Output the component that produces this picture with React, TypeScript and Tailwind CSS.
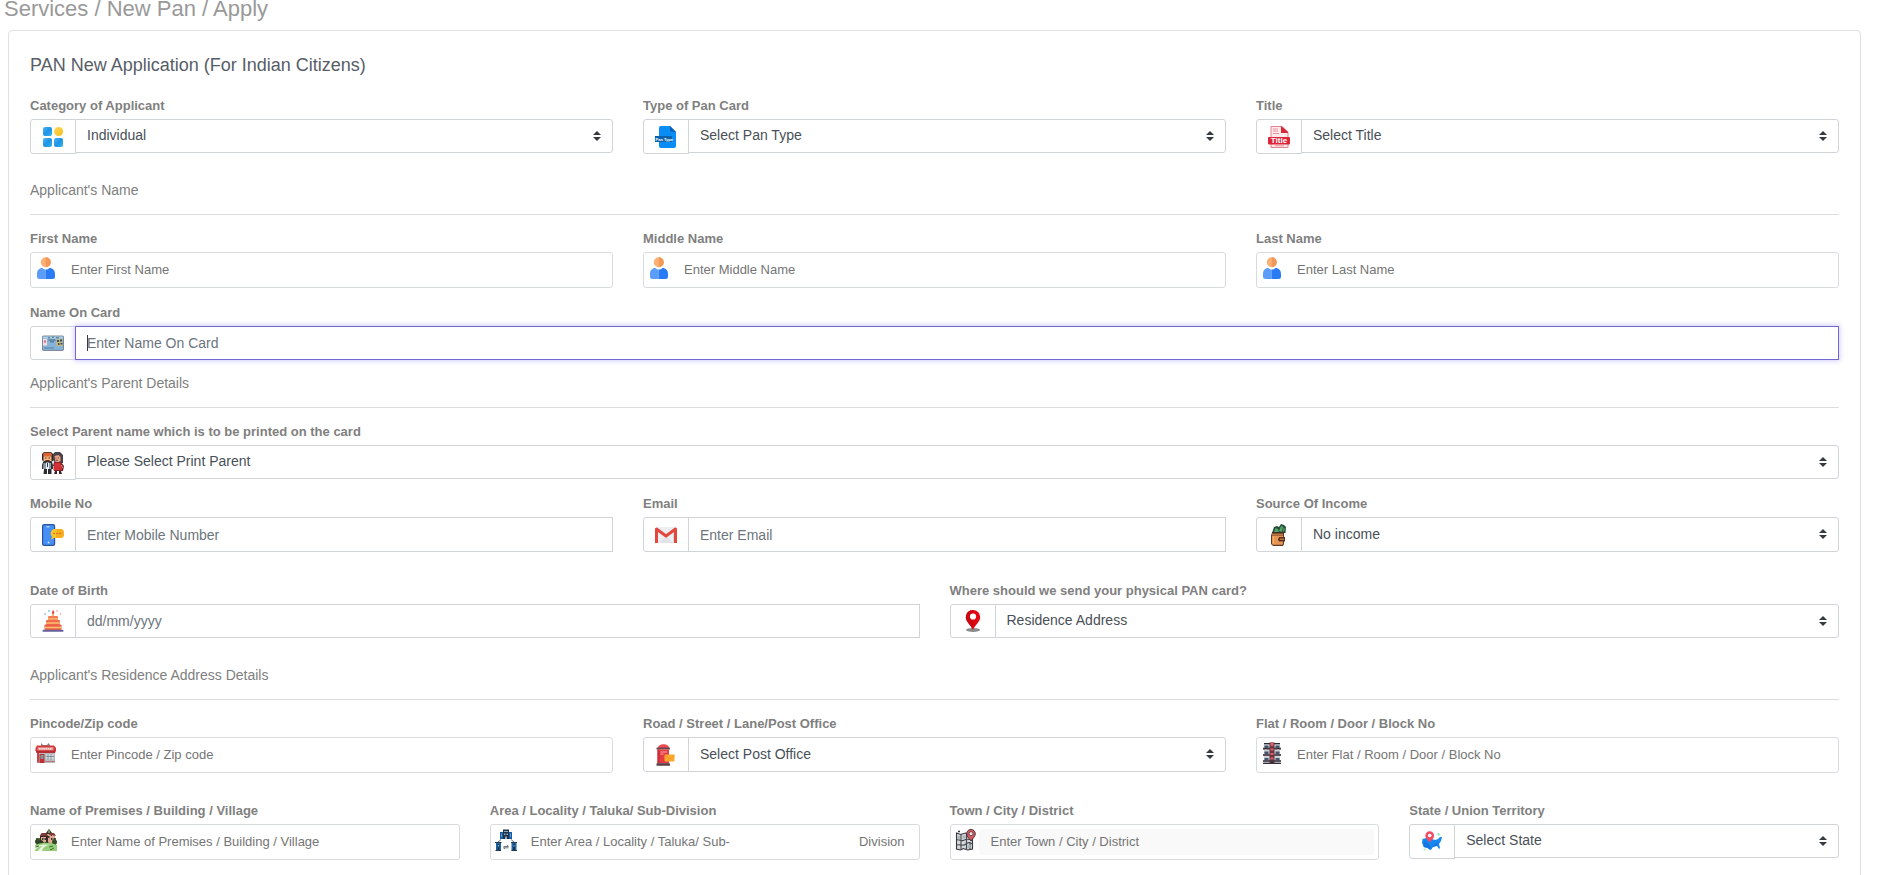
import type { ReactNode } from "react";

type Size = "offset" | "tall" | "short";

const addonHeight: Record<Size, string> = { offset: "h-[35px]", tall: "h-[35px]", short: "h-[34px]" };
const controlHeight: Record<Size, string> = { offset: "h-[34px]", tall: "h-[35px]", short: "h-[34px]" };

function Svg({ children }: { children: ReactNode }) {
  return (
    <svg viewBox="0 0 22 22" className="size-[22px] shrink-0" aria-hidden="true">
      {children}
    </svg>
  );
}

function GridIcon() {
  return (
    <Svg>
      <defs>
        <linearGradient id="tile" x1="0" y1="0" x2="1" y2="1">
          <stop offset="0" stopColor="#4fb4f5" />
          <stop offset="0.5" stopColor="#1f93e6" />
          <stop offset="1" stopColor="#35b3ea" />
        </linearGradient>
        <linearGradient id="sun" x1="0" y1="0" x2="1" y2="1">
          <stop offset="0" stopColor="#ffd75a" />
          <stop offset="1" stopColor="#f9bd1b" />
        </linearGradient>
      </defs>
      <rect x="1" y="1" width="9" height="9" rx="2" fill="url(#tile)" />
      <circle cx="16.6" cy="5.5" r="4.5" fill="url(#sun)" />
      <rect x="1" y="12" width="9" height="9" rx="2" fill="url(#tile)" />
      <rect x="12" y="12" width="9" height="9" rx="2" fill="url(#tile)" />
    </Svg>
  );
}

function PanTypeIcon() {
  return (
    <Svg>
      <path d="M6 0h9l6 6v14a2 2 0 0 1-2 2H6a2 2 0 0 1-2-2V2a2 2 0 0 1 2-2z" fill="#0a8cf5" />
      <path d="M15 0l6 6h-4a2 2 0 0 1-2-2z" fill="#0862b8" />
      <rect x="0" y="10" width="17" height="6" fill="#0a62ad" />
      <text x="0.5" y="14.5" fontSize="4" fontWeight="700" fill="#fff" fontFamily="Liberation Sans, sans-serif">Pan Type</text>
    </Svg>
  );
}

function TitleIcon() {
  return (
    <Svg>
      <path d="M3 .5h11l6 6v15H3z" fill="#fbe9eb" stroke="#e27882" strokeWidth="0.9" />
      <path d="M13 .5h1l6 5.5v1h-7z" fill="#d9283a" />
      <path d="M5 3h5M5 5h5M5 7.5h6M7 19.8h9" stroke="#e58b93" strokeWidth="0.9" />
      <rect x="0" y="11" width="22" height="7.5" rx="1" fill="#de2437" />
      <text x="11" y="17.4" fontSize="8" fontWeight="700" textAnchor="middle" fill="#fff" fontFamily="Liberation Sans, sans-serif">Title</text>
    </Svg>
  );
}

function PersonIcon() {
  return (
    <Svg>
      <circle cx="10.8" cy="5.2" r="5" fill="#fbb074" />
      <path d="M10.8.2a5 5 0 0 1 0 10z" fill="#f2995a" />
      <path d="M2 19.500v-2.500c0-3.600 2-6 5.400-6 1.200 1.200 2 1.500 3.400 1.500V22H4.500A2.500 2.500 0 0 1 2 19.500z" fill="#5c9dfb" />
      <path d="M20 19.500v-2.500c0-3.600-2.200-6-5.500-6-1.200 1.200-2.200 1.500-3.700 1.500V22h6.700a2.500 2.500 0 0 0 2.500-2.500z" fill="#2a7bf6" />
    </Svg>
  );
}

function CardIcon() {
  return (
    <Svg>
      <rect x="0.4" y="4" width="21.2" height="14.4" rx="1" fill="#86b4d8" stroke="#626d78" strokeWidth="0.8" />
      <rect x="0.8" y="4.500" width="20.400" height="2.200" fill="#a9cce2" />
      <rect x="1" y="7" width="4" height="6.500" fill="#f3dfe2" />
      <circle cx="3" cy="9.500" r="1.200" fill="#d4747c" />
      <path d="M6 5.800h2M10 5.200h2M14 5.800h3M6.500 8h7M8 9.800h4" stroke="#40617c" strokeWidth="0.9" />
      <rect x="14.500" y="7" width="6" height="7" fill="#c7b97c" />
      <path d="M15 8h2v2h-2zM18 7.500h2v2h-2zM16 11h1.500v2H16zM18.500 11h2v1.500h-2z" fill="#3e5158" />
      <path d="M2 16h10" stroke="#577fa2" />
    </Svg>
  );
}

function ParentsIcon() {
  return (
    <Svg>
      <path d="M2 0h7l2 2v7l-2 1H2L0 8V2z" fill="#322b2d" />
      <path d="M2 .800h7l1 2-1 2.200H2L1 3z" fill="#dd6435" />
      <path d="M1.500 4.500h8V9h-8z" fill="#f2b37f" />
      <path d="M3 6h1.500M6.500 6H8M3.500 8.500h4" stroke="#5b2418" strokeWidth="0.900" />
      <path d="M13 0h5l3 3v8h-8l-2-3V2z" fill="#4a4249" />
      <path d="M12.500 4l4-1 2 2v4l-2 1h-3z" fill="#eba488" />
      <path d="M13.500 6h1M16 6h1M14 8.300h2" stroke="#5b2418" strokeWidth="0.800" />
      <path d="M1 10h9l1 3v4H0v-4z" fill="#30363d" />
      <path d="M1.500 11h2L5 15l2-4h2v6h-8z" fill="#8da0aa" />
      <path d="M4 10.500h3V17H4z" fill="#edf0f1" />
      <path d="M5 11h1v4H5z" fill="#2d3c4b" />
      <path d="M2 17h3v5H1.500zM6 17h3.500v5H6z" fill="#292c31" />
      <path d="M12 10h7l3 4-1 5h-9l-1-5z" fill="#6e222a" />
      <path d="M12.500 10.800h6l1.500 7.500h-8.500z" fill="#d52f38" />
      <path d="M13 19h2v3h-3zM17 19h2l1 3h-3z" fill="#3a2528" />
      <path d="M19.500 13l1 3M11.500 14v3" stroke="#e79b7e" />
    </Svg>
  );
}

function MobileIcon() {
  return (
    <Svg>
      <rect x="0.600" y="0.600" width="12" height="20.800" rx="1.600" fill="#458ff5" stroke="#28539e" strokeWidth="1.200" />
      <path d="M4.500 2.800h3" stroke="#e2eefc" />
      <circle cx="6.600" cy="18.500" r="1" fill="#c9e1ff" />
      <path d="M12 5h6.500a3.500 4.500 0 0 1 0 9H12l-3 1.500 1-3A4.500 4.500 0 0 1 12 5z" fill="#fbc52c" />
      <path d="M15 5h3.500a3.500 4.500 0 0 1 0 9H14z" fill="#f8ad1e" />
      <circle cx="12" cy="9.500" r="0.800" fill="#ce5522" />
      <circle cx="15" cy="9.500" r="0.800" fill="#ce5522" />
      <circle cx="18" cy="9.500" r="0.800" fill="#ce5522" />
    </Svg>
  );
}

function MailIcon() {
  return (
    <Svg>
      <rect x="1" y="3" width="20" height="16" rx="1.500" fill="#eceef1" />
      <path d="M11 12l7-5v12h2V4z" fill="#d6d9df" />
      <path d="M11 12l7 7H4z" fill="#e0e3e7" />
      <path d="M1.500 19V5l9.500 7 9.500-7v14" fill="none" stroke="#e2483d" strokeWidth="3" strokeLinejoin="round" />
    </Svg>
  );
}

function WalletIcon() {
  return (
    <Svg>
      <path d="M4 9L6 3l3-1 2 1 2-3 3 1 2 2-.5 6z" fill="#244c37" />
      <path d="M6 8l1.500-4L10 5l1 3zM11 7l2-5 2 .5L14 8zM15.500 3l1.500 2-1.500 3H15z" fill="#54a466" />
      <path d="M4 8h12v3H4z" fill="#3e2c24" />
      <path d="M3.500 9.500H16V20L15 22H5l-2-2v-8z" fill="#5d3b2a" />
      <path d="M4 9.500h11v1.500H4z" fill="#bc753d" />
      <path d="M4 11.500h11V19.500l-.7 1.300H4.800L4 20z" fill="#e8964f" />
      <path d="M5.500 12.500v7" stroke="#f2b476" />
      <path d="M11 13h6v4.500h-6l-1-2z" fill="#5b3022" />
      <path d="M12 14.500h4v1.400h-4z" fill="#c1743d" />
    </Svg>
  );
}

function CakeIcon() {
  return (
    <Svg>
      <path d="M11 0c2 2 1.500 4 0 4s-1.500-2 0-4z" fill="#e94747" />
      <path d="M10.300 3.500h1.400V6h-1.400z" fill="#f08e42" />
      <path d="M6 1l1-1 1 1-1 1zM2 4l1-1 1 1-1 1z" fill="#57a9e0" />
      <path d="M14 1l1-1 1 1-1 1zM17.500 4l1-1 1 1-1 1z" fill="#f0a488" />
      <rect x="6" y="6" width="10" height="4.500" rx="1" fill="#f47958" />
      <rect x="4" y="10" width="14" height="5" rx="1" fill="#f1694e" />
      <rect x="2.500" y="14.500" width="17" height="5.500" rx="1" fill="#ee6049" />
      <path d="M6 8.800h10M4 13h14M2.500 17.500h17" stroke="#fbc16d" strokeWidth="1.300" />
      <rect x="0.500" y="19.800" width="21" height="2" rx="0.800" fill="#66609a" />
    </Svg>
  );
}

function PinIcon() {
  return (
    <Svg>
      <ellipse cx="11" cy="19.900" rx="7" ry="2" fill="#8a8a8a" />
      <path d="M11 19.500C8.500 15 3.800 11.500 3.800 7.200a7.200 7.200 0 0 1 14.400 0c0 4.300-4.700 7.800-7.200 12.300z" fill="#e30613" />
      <path d="M11 0v19.500C8.500 15 3.800 11.500 3.800 7.200A7.200 7.200 0 0 1 11 0z" fill="#c90812" />
      <circle cx="11" cy="6.500" r="3.100" fill="#fff" />
    </Svg>
  );
}

function ShopIcon() {
  return (
    <Svg>
      <path d="M6 1l2 2h4l1.500-2 2 3H6z" fill="#7d8588" />
      <path d="M2 3.500h17l2 2.500v3H.500V6z" fill="#d53a3b" />
      <path d="M.500 8.500h20.500l-1 2.500H1.500z" fill="#b72d32" />
      <rect x="2.500" y="5.300" width="16" height="3" fill="#e99a98" />
      <path d="M4 6.800h13" stroke="#fff" strokeDasharray="1.500 .7" />
      <rect x="2" y="11" width="18" height="10" fill="#b4babd" />
      <rect x="2" y="11" width="2" height="9.500" fill="#cb4042" />
      <rect x="4.500" y="12" width="5" height="9" fill="#bd3134" />
      <rect x="5.500" y="13" width="3" height="4" fill="#7c98a2" />
      <rect x="11" y="12" width="7.500" height="5.500" fill="#cfdadd" />
      <path d="M13 12v6M16 12v6M11 14.500h8" stroke="#6f7d84" strokeWidth="0.700" />
      <path d="M10 19.500h10" stroke="#c9767a" />
    </Svg>
  );
}

function PostIcon() {
  return (
    <Svg>
      <path d="M3 4c0-5 11-5 11 0z" fill="#ef4c50" />
      <rect x="1.500" y="3.600" width="13.500" height="2" rx="0.600" fill="#67474d" />
      <rect x="2.500" y="5.500" width="11.500" height="14" fill="#e53b42" />
      <path d="M2.500 5.500h2v14h-2z" fill="#c72f38" />
      <path d="M5.500 8h6.500M5.500 10h3" stroke="#f9a3a4" strokeWidth="1.100" />
      <rect x="1.500" y="19.200" width="13.500" height="2.600" rx="0.600" fill="#554248" />
      <rect x="9.500" y="10.500" width="10" height="7" rx="0.800" fill="#fca92e" />
      <path d="M10 11l5 4 4.500-4" fill="none" stroke="#f59024" strokeWidth="0.900" />
    </Svg>
  );
}

function FlatIcon() {
  return (
    <Svg>
      <rect x="3" y="1.500" width="16" height="20" fill="#cad3d8" />
      <path d="M3 1.700h16M2 6.500h7M13 6.500h7M2 13h7M13 13h7M2 19h7M13 19h7M2 21.500h18" stroke="#302b34" strokeWidth="1.300" />
      <path d="M3.500 3.500h4v2.500h-4zM14.500 3.500h4v2.500h-4zM3.500 9.500h4V12h-4zM14.500 9.500h4V12h-4zM3.500 16h4v2.500h-4zM14.500 16h4v2.500h-4z" fill="#44526a" />
      <path d="M2 7h2M6 7h2.500M14 7h2M18 7h2M2 13.500h2M6 13.500h2M18 13.500h2M2 19.500h2M18 19.500h2" stroke="#7b3f49" strokeWidth="1.200" />
      <rect x="8.500" y="0.400" width="5" height="21" fill="#6b343e" />
      <path d="M9.500 1h3v3h-3zM9.500 6.500h3v2h-3zM9.500 11h3v2h-3zM9.500 15.500h3v2h-3z" fill="#d9616b" />
      <rect x="9.500" y="18.500" width="3" height="3" fill="#383340" />
    </Svg>
  );
}

function VillageIcon() {
  return (
    <Svg>
      <path d="M1 9h20v7H1z" fill="#4d6b35" />
      <path d="M11 4l3-4 3 4v10h-6z" fill="#3f2d2c" />
      <path d="M12 5h4v9h-4z" fill="#d9a993" />
      <path d="M13 2l1-2 1 2v2h-2z" fill="#719461" />
      <path d="M5 7l2-3h4l2 3v8H5z" fill="#3b2726" />
      <path d="M6 8h5v7H6zM15 7h5v8h-5z" fill="#e4a98f" />
      <path d="M4.500 7L7 4h4l1 3zM14 6l1-2h4l2 3z" fill="#7d3a37" />
      <path d="M7 9h1.500v2H7zM9.500 9H11v2H9.500zM13 7h1.500v2H13zM16 9h1.500v2H16zM18.500 9H20v2h-1.500z" fill="#3a393b" />
      <circle cx="2.500" cy="12.500" r="2.500" fill="#2e4728" />
      <circle cx="19.500" cy="13" r="2.500" fill="#304c29" />
      <path d="M5 12l2-1 2 3 3-2 3 3H4z" fill="#293a23" />
      <path d="M0 16c8-3 14-3 22 0v6H0z" fill="#97cd7b" />
      <path d="M0 19c4-4 11-4 15-3-5 0-7 3-8 6H3c2-3 3-4 5-5-4 0-6 2-8 4z" fill="#eef4e4" />
      <path d="M14 18l4-1M15 21l4-2M1 18l3-1" stroke="#426d37" />
    </Svg>
  );
}

function AreaIcon() {
  return (
    <Svg>
      <path d="M5 3h12v7H5z" fill="#185ca4" />
      <path d="M8 .500h6V10H8z" fill="#24313f" />
      <path d="M9 2h4v1H9zM9 4.500h1.500V6H9zM11.500 4.500H13V6h-1.500zM10 7.500h2V10h-2z" fill="#84aeca" />
      <path d="M6 4.500h1V8H6zM15 4.500h1V8h-1z" fill="#4e9ce1" />
      <path d="M3 13l3-2.500M19 13l-3-2.500" stroke="#525c65" strokeWidth="0.900" />
      <path d="M1 14h5v8H1zM16.500 14h5v8h-5z" fill="#1767ae" />
      <path d="M0 13.500h6.500M16 13.500h6M.500 21.500H6M16.500 21.500H22" stroke="#23364a" />
      <path d="M2.500 15h2v7h-2zM18 15h2v7h-2z" fill="#1f3447" />
      <path d="M3 16h1v1.500H3zM18.500 16h1v1.500h-1z" fill="#99c4df" />
      <path d="M8.500 17.500h5l-1.500-1.300M13.500 18.800h-5l1.500 1.200" fill="none" stroke="#4b555e" strokeWidth="0.800" />
    </Svg>
  );
}

function TownIcon() {
  return (
    <Svg>
      <path d="M1.500 4l4 1.500 5-1.500 5 2 2 4v10l-5 1-4-1.500-3 1.500-4-1z" fill="#d3d8db" stroke="#35353b" strokeWidth="1.100" />
      <path d="M6 5v15M11.500 5v15" stroke="#484a50" strokeWidth="1.100" />
      <path d="M1.500 11c3-1 5 2 8 0s5 0 8 0M2 16c4-1 6 2 9-1s4-1 7 0M15 13v7" fill="none" stroke="#484a50" strokeWidth="1.100" />
      <path d="M2.500 7h2.500v3H2.500zM7.500 6.500h3v3h-3zM12.500 16h3v3h-3z" fill="#aab5ba" />
      <path d="M3 2.500h2" stroke="#35353b" strokeWidth="1.600" />
      <path d="M16 12c-2-3-4.300-4.300-4.300-7.300a4.300 4.300 0 0 1 8.600 0c0 3-2.300 4.300-4.300 7.300z" fill="#d95b62" stroke="#3b2a30" strokeWidth="0.900" />
      <circle cx="16" cy="4.700" r="2" fill="#f7e6e6" stroke="#3b2a30" strokeWidth="0.700" />
    </Svg>
  );
}

function StateIcon() {
  return (
    <Svg>
      <path d="M1.500 8l4-1 5 1 4 1 2.500-1 2-2h2l-1 4-2 3 1 4-1 1-2-3-4 1-2 3-2.500-2-4.500-1-2-4z" fill="#1687f0" />
      <path d="M3 10l5 3 2 4 4-4 4-2-3 4-4 1-2 3-2.500-2-4-1z" fill="#1477df" />
      <path d="M8.700 11.500C7 8.800 4.300 7.500 4.300 4.700a4.400 4.400 0 0 1 8.800 0c0 2.800-2.700 4.100-4.400 6.800z" fill="#f04e66" />
      <circle cx="8.700" cy="4.500" r="1.800" fill="#fff" />
      <circle cx="17.500" cy="3.500" r="1.400" fill="#9ce8c2" />
      <circle cx="3.500" cy="18.500" r="1.100" fill="#9ce8c2" />
    </Svg>
  );
}

function Label({ id, children }: { id: string; children: ReactNode }) {
  return (
    <label htmlFor={id} className="mb-[3px] block h-5 text-[13px] leading-5 font-bold whitespace-nowrap text-[#808080]">
      {children}
    </label>
  );
}

function Addon({ size, children }: { size: Size; children: ReactNode }) {
  return (
    <span className={`${addonHeight[size]} flex w-[46px] shrink-0 items-center justify-center rounded-l-[3px] border border-[#d0d4d8]`}>
      {children}
    </span>
  );
}

type FieldProps = { id: string; label: string; icon: ReactNode; text: string; size?: Size };

function SelectField({ id, label, icon, text, size = "offset" }: FieldProps) {
  return (
    <div className="min-w-0">
      <Label id={id}>{label}</Label>
      <div className="flex h-[35px] items-start">
        <Addon size={size}>{icon}</Addon>
        <div className="relative -ml-px min-w-0 flex-1">
          <select id={id} className={`${controlHeight[size]} block w-full appearance-none rounded-r-[3px] border border-[#d0d4d8] bg-white px-[11px] pb-px text-[14px] text-[#495057] outline-none`}>
            <option>{text}</option>
          </select>
          <svg viewBox="0 0 8 10" className="pointer-events-none absolute top-3 right-3 h-[10px] w-2" aria-hidden="true">
            <path d="M4 0l4 4H0zM4 10L0 6h8z" fill="#343a40" />
          </svg>
        </div>
      </div>
    </div>
  );
}

function TextField({ id, label, icon, text, size = "tall", autoFocus = false }: FieldProps & { autoFocus?: boolean }) {
  return (
    <div className="min-w-0">
      <Label id={id}>{label}</Label>
      <div className="flex h-[35px] items-start">
        <Addon size={size}>{icon}</Addon>
        <div className="relative -ml-px min-w-0 flex-1">
          <input
            id={id}
            type="text"
            placeholder={text}
            autoFocus={autoFocus}
            className={`${controlHeight[size]} peer block w-full border border-[#d0d4d8] bg-white px-[11px] text-[14px] text-[#495057] outline-none placeholder:text-[#6c757d] placeholder-shown:caret-transparent focus:border-[#7367d0] focus:shadow-[0_0_5px_1px_#d3cdfb]`}
          />
          <span className="pointer-events-none absolute top-[9px] left-3 hidden h-4 w-px bg-[#343a40] peer-placeholder-shown:peer-focus:block" />
        </div>
      </div>
    </div>
  );
}

function OutlinedField({ id, label, icon, text, trailing, muted = false }: FieldProps & { trailing?: string; muted?: boolean }) {
  return (
    <div className="min-w-0">
      <Label id={id}>{label}</Label>
      <div className="flex h-9 rounded-[3px] border border-[#d9dcdf] bg-white px-1 py-1">
        {icon}
        <input
          id={id}
          type="text"
          placeholder={text}
          className={`${muted ? "bg-[#f9f9f9]" : "bg-white"} ml-[2px] min-w-0 flex-1 rounded-[3px] px-3 text-[13px] text-[#495057] outline-none placeholder:text-[#757575]`}
        />
        {trailing && <span className="self-center pr-[10px] text-[13px] text-[#757575]">{trailing}</span>}
      </div>
    </div>
  );
}

function SectionHeading({ children }: { children: ReactNode }) {
  return (
    <h3 className="mb-[14px] border-b border-[#dcdcdc] pb-[14px] text-[14px] leading-5 font-normal text-[#808080]">{children}</h3>
  );
}

export default function App() {
  return (
    <main className="bg-white pr-4 pl-2 font-['Liberation_Sans',Arial,sans-serif]">
      <nav aria-label="Breadcrumb" className="-ml-1 h-[30px]">
        <p className="text-[22px] leading-[18px] text-[#999]">Services / New Pan / Apply</p>
      </nav>
      <form className="rounded-[4px] border border-[#dee0e2] px-[21px] pt-[22px] pb-10">
        <h2 className="mb-[19px] text-[18px] leading-6 font-normal text-[#565d67]">PAN New Application (For Indian Citizens)</h2>
        <div className="mb-[26px] grid grid-cols-3 gap-[30px]">
          <SelectField id="category" label="Category of Applicant" icon={<GridIcon />} text="Individual" />
          <SelectField id="pan-type" label="Type of Pan Card" icon={<PanTypeIcon />} text="Select Pan Type" />
          <SelectField id="title" label="Title" icon={<TitleIcon />} text="Select Title" />
        </div>

        <SectionHeading>Applicant's Name</SectionHeading>
        <div className="mb-[15px] grid grid-cols-3 gap-[30px]">
          <OutlinedField id="first-name" label="First Name" icon={<PersonIcon />} text="Enter First Name" />
          <OutlinedField id="middle-name" label="Middle Name" icon={<PersonIcon />} text="Enter Middle Name" />
          <OutlinedField id="last-name" label="Last Name" icon={<PersonIcon />} text="Enter Last Name" />
        </div>
        <div className="mb-3">
          <TextField id="card-name" label="Name On Card" icon={<CardIcon />} text="Enter Name On Card" size="short" autoFocus />
        </div>

        <SectionHeading>Applicant's Parent Details</SectionHeading>
        <div className="mb-[14px]">
          <SelectField id="parent" label="Select Parent name which is to be printed on the card" icon={<ParentsIcon />} text="Please Select Print Parent" />
        </div>
        <div className="mb-[29px] grid grid-cols-3 gap-[30px]">
          <TextField id="mobile" label="Mobile No" icon={<MobileIcon />} text="Enter Mobile Number" />
          <TextField id="email" label="Email" icon={<MailIcon />} text="Enter Email" />
          <SelectField id="income" label="Source Of Income" icon={<WalletIcon />} text="No income" size="tall" />
        </div>
        <div className="mb-[26px] grid grid-cols-2 gap-[30px]">
          <TextField id="dob" label="Date of Birth" icon={<CakeIcon />} text="dd/mm/yyyy" size="short" />
          <SelectField id="send-to" label="Where should we send your physical PAN card?" icon={<PinIcon />} text="Residence Address" size="short" />
        </div>

        <SectionHeading>Applicant's Residence Address Details</SectionHeading>
        <div className="mb-[28px] grid grid-cols-3 gap-[30px]">
          <OutlinedField id="pincode" label="Pincode/Zip code" icon={<ShopIcon />} text="Enter Pincode / Zip code" />
          <SelectField id="road" label="Road / Street / Lane/Post Office" icon={<PostIcon />} text="Select Post Office" size="tall" />
          <OutlinedField id="flat" label="Flat / Room / Door / Block No" icon={<FlatIcon />} text="Enter Flat / Room / Door / Block No" />
        </div>
        <div className="grid grid-cols-4 gap-[30px]">
          <OutlinedField id="premises" label="Name of Premises / Building / Village" icon={<VillageIcon />} text="Enter Name of Premises / Building / Village" />
          <OutlinedField id="area" label="Area / Locality / Taluka/ Sub-Division" icon={<AreaIcon />} text="Enter Area / Locality / Taluka/ Sub-" trailing="Division" />
          <OutlinedField id="town" label="Town / City / District" icon={<TownIcon />} text="Enter Town / City / District" muted />
          <SelectField id="state" label="State / Union Territory" icon={<StateIcon />} text="Select State" />
        </div>
      </form>
    </main>
  );
}
